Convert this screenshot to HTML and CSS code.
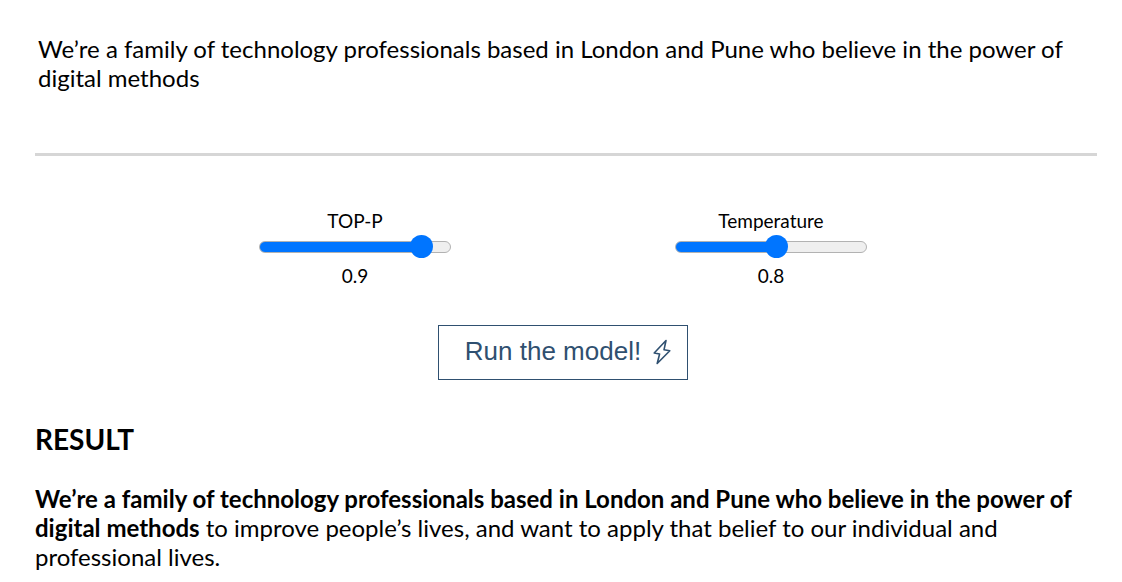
FILE: index.html
```html
<!DOCTYPE html>
<html lang="en">
  <head>
    <meta charset="UTF-8" />
    <meta name="viewport" content="width=device-width, initial-scale=1.0" />
    <title>Text generation</title>
    <link rel="stylesheet" href="styles.css">
  </head>
  <body>
    <form id="model-form">
      <textarea class="prompt" id="prompt" rows="4" aria-label="Prompt" spellcheck="false">We’re a family of technology professionals based in London and Pune who believe in the power of digital methods</textarea>

      <div class="controls">
        <div class="control">
          <label for="top-p">TOP-P</label>
          <input type="range" id="top-p" min="0" max="1" step="0.1" value="0.9" />
          <output for="top-p">0.9</output>
        </div>
        <div class="control">
          <label for="temperature">Temperature</label>
          <input type="range" id="temperature" min="0" max="1.5" step="0.1" value="0.8" />
          <output for="temperature">0.8</output>
        </div>
      </div>

      <div class="actions">
        <button type="submit" class="run-btn">
          Run the model!
          <svg class="bolt" viewBox="0 0 18 26" aria-hidden="true">
            <path d="M13 1.5 L1.2 14 L6.6 15 L4.2 24.5 L16.8 11.8 L11 10.8 Z" />
          </svg>
        </button>
      </div>
    </form>

    <section class="result">
      <h2>RESULT</h2>
      <p><b>We’re a family of technology professionals based in London and Pune who believe in the power of digital methods</b> to improve people’s lives, and want to apply that belief to our individual and professional lives.</p>
    </section>

    <script>
      // fill the track up to the thumb and show the current value
      function updateSlider(slider) {
        const percent = (slider.value - slider.min) / (slider.max - slider.min);
        slider.style.setProperty("--fill", percent);
        slider.nextElementSibling.value = slider.value;
      }

      document.querySelectorAll("input[type=range]").forEach((slider) => {
        updateSlider(slider);
        slider.addEventListener("input", () => updateSlider(slider));
      });

      document.getElementById("model-form").addEventListener("submit", (e) => {
        e.preventDefault();
      });
    </script>
  </body>
</html>
```
FILE: styles.css
```css
* {
  box-sizing: border-box;
}

body {
  font-family: Lato, sans-serif;
  font-size: 24px;
  background-color: #fff;
  color: #000;
  margin: 0;
  padding: 31px 25px 0 35px;
}

.prompt {
  display: block;
  width: 100%;
  padding: 3px;
  border: none;
  border-bottom: 3px solid #d6d6d6;
  outline: none;
  resize: none;
  overflow: hidden;
  background: none;
  color: inherit;
  font-family: inherit;
  font-size: 24px;
  line-height: 29px;
}

.controls {
  display: flex;
  justify-content: space-evenly;
  padding: 53px 6px 0 0;
}

.control {
  display: flex;
  flex-direction: column;
  align-items: center;
  width: 192px;
  font-size: 19px;
  line-height: 24px;
}

input[type="range"] {
  appearance: none;
  -webkit-appearance: none;
  width: 100%;
  height: 24px;
  margin: 2px 0 5px;
  background: none;
  cursor: pointer;
}

input[type="range"]::-webkit-slider-runnable-track {
  height: 12px;
  border: 1px solid #b2b2b2;
  border-radius: 6px;
  background: linear-gradient(
      to right,
      #0075ff calc(12px + (100% - 24px) * var(--fill)),
      #efefef 0
    )
    border-box;
}

input[type="range"]::-webkit-slider-thumb {
  -webkit-appearance: none;
  width: 23px;
  height: 23px;
  margin-top: -7px;
  border-radius: 50%;
  background-color: #0075ff;
}

.actions {
  display: flex;
  justify-content: center;
  padding: 37px 6px 0 0;
}

.run-btn {
  display: flex;
  align-items: center;
  gap: 12px;
  height: 55px;
  padding: 0 16px 2px 26px;
  border: 1px solid #2f5070;
  background-color: #fff;
  color: #2f5070;
  font-family: "Liberation Sans", Arial, sans-serif;
  font-size: 26px;
  cursor: pointer;
}

.bolt {
  width: 18px;
  height: 26px;
  fill: none;
  stroke: currentColor;
  stroke-width: 1.6;
  stroke-linejoin: round;
}

.result {
  padding-top: 42px;
}

h2 {
  margin: 0 0 28px;
  font-size: 28px;
  line-height: 34px;
}

p {
  margin: 0;
  line-height: 29px;
}
```
